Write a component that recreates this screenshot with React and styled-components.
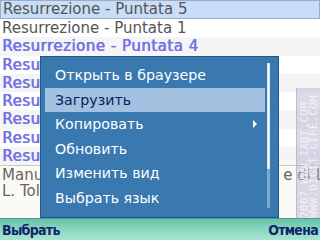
import React from "react";
import styled, { createGlobalStyle } from "styled-components";

const Global = createGlobalStyle`
  html, body { margin: 0; padding: 0; background: #fff; }
`;

const Screen = styled.div`
  position: relative;
  width: 320px;
  height: 240px;
  overflow: hidden;
  background: #fff;
  font-family: "DejaVu Sans", "Liberation Sans", sans-serif;
  display: flex;
  flex-direction: column;
`;

const List = styled.div`
  display: flex;
  flex-direction: column;
`;

const Row = styled.div`
  height: ${p => (p.selected ? "17px" : "18.3px")};
  line-height: ${p => (p.selected ? "17px" : "18px")};
  padding-left: 2px;
  font-size: 15px;
  white-space: nowrap;
  overflow: hidden;
  color: ${p => (p.unread ? "#7272e6" : "#555")};
  letter-spacing: ${p => (p.unread ? "0.5px" : "0")};
  text-shadow: ${p => (p.unread ? "0.7px 0 0 #7272e6" : "none")};
  background: ${p => (p.selected ? "#c9ddf8" : p.odd ? "#f5f5f5" : "#fff")};
  border: ${p => (p.selected ? "1px solid #98aec8" : "none")};
`;

const Details = styled.div`
  flex: 1;
  border-top: 1px solid #c8c8c8;
  background: #fcfaf6;
  padding: 1px 2px;
  font-size: 15px;
  line-height: 16px;
  color: #666;
  white-space: nowrap;
  overflow: hidden;
`;

const SoftBar = styled.div`
  position: relative;
  z-index: 2;
  height: 21px;
  display: flex;
  justify-content: space-between;
  align-items: center;
  padding: 0 2px;
  background: linear-gradient(#66c2a8, #8ad8c0 50%, #a6e6d2);
  border-top: 1px solid #4aa08a;
`;

const SoftKey = styled.span`
  font-family: "DejaVu Sans Condensed", "Liberation Sans", sans-serif;
  font-weight: bold;
  font-size: 14px;
  color: #14246a;
  letter-spacing: -0.7px;
`;

const Menu = styled.div`
  position: absolute;
  left: 40px;
  top: 56px;
  width: 239px;
  height: 162px;
  background: #3a78b0;
  border: 1px solid #24558a;
  padding: 6px 0 0 4px;
  box-sizing: border-box;
  display: flex;
  flex-direction: column;
`;

const Item = styled.div`
  position: relative;
  width: 220px;
  height: 24.6px;
  line-height: 24px;
  padding-left: 10px;
  box-sizing: border-box;
  font-size: 14.2px;
  color: ${p => (p.active ? "#0c1c5a" : "#fff")};
  background: ${p => (p.active ? "#a3c2e2" : "transparent")};
  white-space: nowrap;
`;

const Arrow = styled.span`
  position: absolute;
  right: 8px;
  top: 8px;
  width: 0;
  height: 0;
  border-left: 4px solid #fff;
  border-top: 4px solid transparent;
  border-bottom: 4px solid transparent;
`;

const Track = styled.div`
  position: absolute;
  left: 226px;
  top: 6px;
  width: 3px;
  height: 145px;
  background: #7ea8d2;
  border-radius: 1px;
`;

const Thumb = styled.div`
  width: 3px;
  height: 106px;
  background: linear-gradient(90deg, #c8d8e8, #fff, #c8d8e8);
  border-radius: 1px;
`;

const Watermark = styled.div`
  position: absolute;
  right: 0;
  top: 88px;
  width: 23px;
  height: 152px;
  background: rgba(176, 172, 204, 0.45);
  border-left: 1px solid rgba(170, 170, 200, 0.6);
`;

const MarkText = styled.div`
  position: absolute;
  left: 2px;
  bottom: 22px;
  transform-origin: left bottom;
  transform: translateX(19px) rotate(-90deg);
  font-family: "DejaVu Sans Mono", monospace;
  font-size: 11px;
  line-height: 9px;
  letter-spacing: 0.2px;
  color: #f2f2f8;
  white-space: nowrap;
`;

const rows = [
  { t: "Resurrezione - Puntata 5", selected: true },
  { t: "Resurrezione - Puntata 1" },
  { t: "Resurrezione - Puntata 4", unread: true },
  { t: "Resurrezione - Puntata 3", unread: true },
  { t: "Resurrezione - Puntata 2", unread: true },
  { t: "Resurrezione - Puntata 6", unread: true },
  { t: "Resurrezione - Puntata 7", unread: true },
  { t: "Resurrezione - Puntata 8", unread: true },
  { t: "Resurrezione - Puntata 9", unread: true },
];

const items = [
  "Открыть в браузере",
  "Загрузить",
  "Копировать",
  "Обновить",
  "Изменить вид",
  "Выбрать язык",
];

export default function App() {
  return (
    <Screen>
      <Global />
      <List>
        {rows.map((r, i) => (
          <Row key={i} selected={r.selected} unread={r.unread} odd={i % 2 === 0 && !r.selected}>
            {r.t}
          </Row>
        ))}
      </List>
      <Details>
        Manuale della Resurrezione, L.Tolstoj e di Lev
        <br />
        L. Tolstoj
      </Details>
      <SoftBar>
        <SoftKey>Выбрать</SoftKey>
        <SoftKey>Отмена</SoftKey>
      </SoftBar>
      <Menu>
        {items.map((it, i) => (
          <Item key={it} active={i === 1}>
            {it}
            {i === 2 && <Arrow />}
          </Item>
        ))}
        <Track>
          <Thumb />
        </Track>
      </Menu>
      <Watermark>
        <MarkText>
          2007 WWW.IXBT.COM
          <br />
          WWW.DIGIT-LIFE.COM
        </MarkText>
      </Watermark>
    </Screen>
  );
}
